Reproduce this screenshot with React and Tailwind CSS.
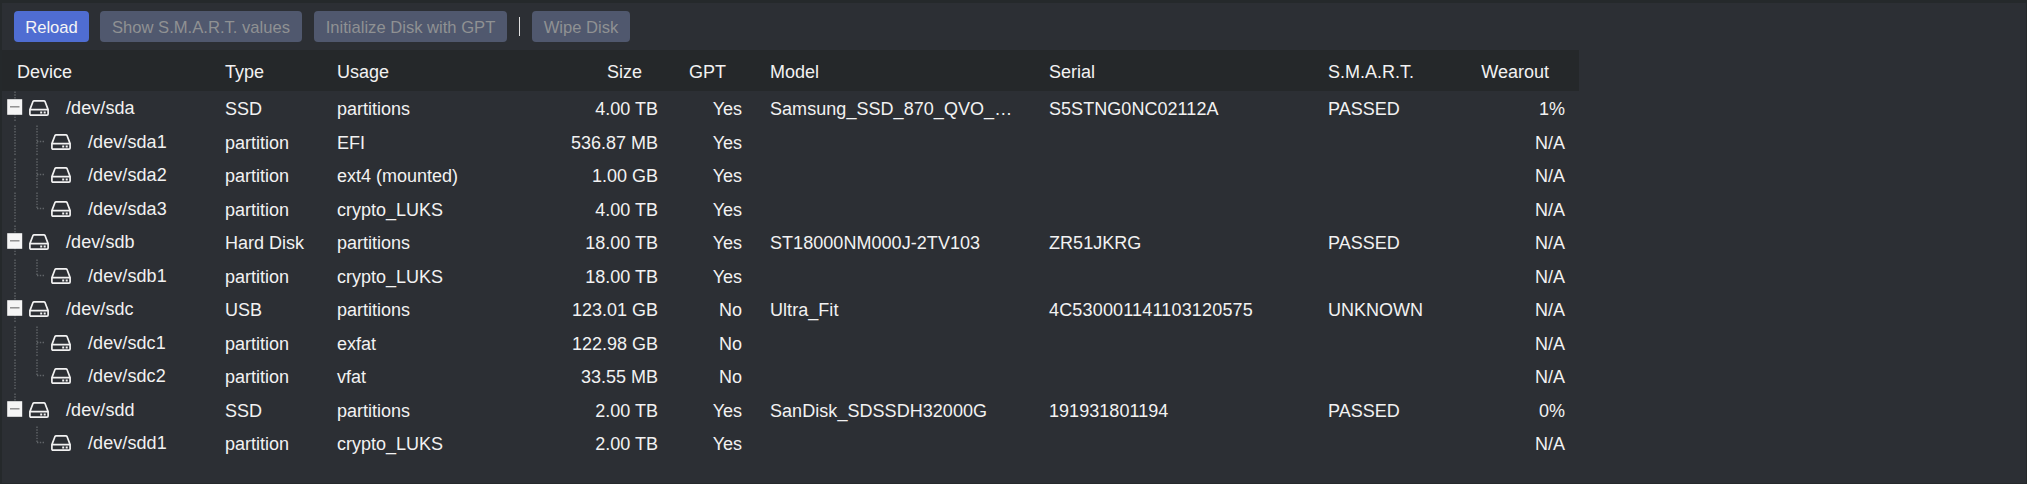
const columns = "grid grid-cols-[209px_112px_215px_134px_84px_279px_279px_154px_111px]";

const devices = [
  { name: "/dev/sda", type: "SSD", usage: "partitions", size: "4.00 TB", gpt: "Yes", model: "Samsung_SSD_870_QVO_4TB", serial: "S5STNG0NC02112A", smart: "PASSED", wearout: "1%",
    parts: [["/dev/sda1", "EFI", "536.87 MB"], ["/dev/sda2", "ext4 (mounted)", "1.00 GB"], ["/dev/sda3", "crypto_LUKS", "4.00 TB"]] },
  { name: "/dev/sdb", type: "Hard Disk", usage: "partitions", size: "18.00 TB", gpt: "Yes", model: "ST18000NM000J-2TV103", serial: "ZR51JKRG", smart: "PASSED", wearout: "N/A",
    parts: [["/dev/sdb1", "crypto_LUKS", "18.00 TB"]] },
  { name: "/dev/sdc", type: "USB", usage: "partitions", size: "123.01 GB", gpt: "No", model: "Ultra_Fit", serial: "4C530001141103120575", smart: "UNKNOWN", wearout: "N/A",
    parts: [["/dev/sdc1", "exfat", "122.98 GB"], ["/dev/sdc2", "vfat", "33.55 MB"]] },
  { name: "/dev/sdd", type: "SSD", usage: "partitions", size: "2.00 TB", gpt: "Yes", model: "SanDisk_SDSSDH32000G", serial: "191931801194", smart: "PASSED", wearout: "0%",
    parts: [["/dev/sdd1", "crypto_LUKS", "2.00 TB"]] },
];

const rows = devices.flatMap((d, i) => {
  const lastDevice = i === devices.length - 1;
  return [
    { ...d, root: true, last: lastDevice },
    ...d.parts.map(([name, usage, size], j) => ({
      name, usage, size, type: "partition", gpt: d.gpt, wearout: "N/A",
      last: j === d.parts.length - 1, trunk: !lastDevice,
    })),
  ];
});

function DiskIcon() {
  return (
    <svg className="h-4 w-5 shrink-0" viewBox="0 0 20 16" fill="none" stroke="#f2f2f2" strokeWidth="1.7" strokeLinejoin="round">
      <path d="M.9 9.6 3.9 1.7Q4.3.9 5.2.9h9.6q.9 0 1.3.8l3 7.9v4.3q0 1.2-1.2 1.2H2.1q-1.2 0-1.2-1.2ZM.9 9.6h18.2" />
      <path d="M11.2 11.5h2v2h-2zM14.7 11.5h2v2h-2z" fill="#f2f2f2" stroke="none" />
    </svg>
  );
}

function Tree({ row }) {
  const line = { stroke: "#606468", strokeWidth: 1.4, strokeDasharray: "1.4 1.4" };
  if (row.root) {
    return (
      <svg className="h-full w-[27px] shrink-0" viewBox="0 0 27 33.5" preserveAspectRatio="xMinYMin meet">
        <path d={row.last ? "M13 .5V10" : "M13 .5V31"} {...line} />
        <rect x="5.2" y="8.2" width="15" height="15.6" fill="#f5f5f5" />
        <path d="M8 15.8h9.5" stroke="#888" strokeWidth="1.4" />
      </svg>
    );
  }
  return (
    <svg className="h-full w-[49px] shrink-0" viewBox="0 0 49 33.5" preserveAspectRatio="xMinYMin meet">
      {row.trunk && <path d="M13 .5V31" {...line} />}
      <path d={row.last ? "M35 .5V16.5" : "M35 .5V31"} {...line} />
      <path d="M35 16.5h7" {...line} />
    </svg>
  );
}

function Row({ row }) {
  return (
    <div className={`${columns} h-[33.5px] leading-[37px]`}>
      <div className="flex h-full">
        <Tree row={row} />
        <span className="pt-2.25"><DiskIcon /></span>
        <span className="ml-[17px] leading-[35px] tracking-[0.08px]">{row.name}</span>
      </div>
      <div className="px-3.5">{row.type}</div>
      <div className="px-3.5">{row.usage}</div>
      <div className="whitespace-nowrap pr-3.5 text-right">{row.size}</div>
      <div className="pr-3.5 text-right">{row.gpt}</div>
      <div className="truncate px-3.5 tracking-[0.05px]">{row.model}</div>
      <div className={`px-3.5 ${row.serial?.length > 16 ? "tracking-[0.17px]" : "tracking-[0.05px]"}`}>{row.serial}</div>
      <div className="px-3.5">{row.smart}</div>
      <div className="pr-3.5 text-right">{row.wearout}</div>
    </div>
  );
}

function Button({ width, primary, children }) {
  return (
    <button
      disabled={!primary}
      className={`${width} h-[31px] whitespace-nowrap rounded-[4px] pt-[3px] text-center text-[16.6px] leading-[28px] ${primary ? "bg-[#4f6dd2] text-[#f5f5f5]" : "bg-[#50586e] text-[#8f9193]"}`}
    >
      {children}
    </button>
  );
}

export default function App() {
  return (
    <div className="h-[484px] w-[2027px] overflow-hidden border-b border-l-2 border-r border-t-[3px] border-[#25292b] bg-[#2c2f34] font-['Liberation_Sans',Arial,sans-serif] text-[18px] text-[#f2f2f2]">
      <div className="flex h-[47px] items-start pl-3 pt-2">
        <Button width="w-[75px]" primary>Reload</Button>
        <span className="w-[11px]" />
        <Button width="w-[202px]">Show S.M.A.R.T. values</Button>
        <span className="w-3" />
        <Button width="w-[193px]">Initialize Disk with GPT</Button>
        <span className="mx-3 mt-1.5 h-[19px] w-px bg-[#e0e0e0]" />
        <Button width="w-[98px]">Wipe Disk</Button>
      </div>
      <div className={`${columns} h-[41px] w-[1577px] bg-[#25282a] leading-[45px]`}>
        <div className="px-[15px]">Device</div>
        <div className="px-3.5">Type</div>
        <div className="px-3.5">Usage</div>
        <div className="pr-[30px] text-right">Size</div>
        <div className="pr-[30px] text-right">GPT</div>
        <div className="px-3.5">Model</div>
        <div className="px-3.5">Serial</div>
        <div className="px-3.5">S.M.A.R.T.</div>
        <div className="pr-[30px] text-right">Wearout</div>
      </div>
      <div className="w-[1577px]">
        {rows.map((row) => <Row key={row.name} row={row} />)}
      </div>
    </div>
  );
}
